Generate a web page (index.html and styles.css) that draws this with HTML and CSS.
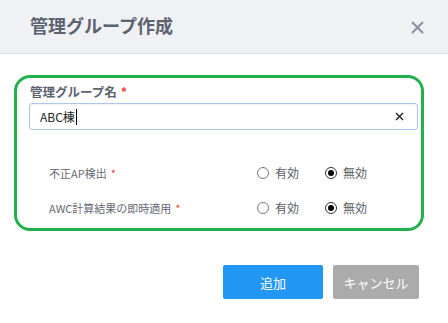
FILE: index.html
```html
<!DOCTYPE html>
<html lang="ja">
<head>
<meta charset="utf-8">
<title>管理グループ作成</title>
<link rel="stylesheet" href="styles.css">
</head>
<body>
<div class="dialog">
  <div class="header">
    <div class="title">管理グループ作成</div>
    <div class="close">
      <svg width="13" height="13" viewBox="0 0 13 13"><path d="M1 1L12 12M12 1L1 12" stroke="#8b909c" stroke-width="2" fill="none"/></svg>
    </div>
  </div>
  <div class="panel">
    <div class="field-label">管理グループ名<span class="req">*</span></div>
    <div class="input">
      <span class="value">ABC棟</span><span class="caret"></span>
      <span class="clear">
        <svg width="9" height="9" viewBox="0 0 9 9"><path d="M1 1L8 8M8 1L1 8" stroke="#222" stroke-width="1.4" fill="none"/></svg>
      </span>
    </div>
    <div class="row first">
      <div class="row-label">不正AP検出<span class="req">*</span></div>
      <div class="radios">
        <div class="radio"><span class="circle"></span><span class="rtext">有効</span></div>
        <div class="radio"><span class="circle checked"></span><span class="rtext">無効</span></div>
      </div>
    </div>
    <div class="row">
      <div class="row-label">AWC計算結果の即時適用<span class="req">*</span></div>
      <div class="radios">
        <div class="radio"><span class="circle"></span><span class="rtext">有効</span></div>
        <div class="radio"><span class="circle checked"></span><span class="rtext">無効</span></div>
      </div>
    </div>
  </div>
  <div class="footer">
    <div class="btn primary">追加</div>
    <div class="btn secondary">キャンセル</div>
  </div>
</div>
</body>
</html>
```
FILE: styles.css
```css
* { box-sizing: border-box; }
html, body { margin: 0; padding: 0; background: #fff; }
body {
  font-family: "Noto Sans CJK JP", "Noto Sans", sans-serif;
  width: 448px;
  height: 323px;
  overflow: hidden;
}
.header {
  display: flex;
  justify-content: space-between;
  height: 54px;
  background: #f0f1f4;
  border-bottom: 1px solid #dcdde1;
}
.title {
  padding-left: 30px;
  line-height: 50px;
  font-size: 18px;
  font-weight: bold;
  color: #5c6270;
}
.close {
  margin-top: 21px;
  margin-right: 24px;
  width: 13px;
  height: 13px;
  display: flex;
}
.panel {
  margin: 21px 24px 0 14px;
  border: 3px solid #21b04b;
  border-radius: 16px;
  padding: 5px 3px 2px 12px;
  height: 156px;
}
.field-label {
  padding-left: 1px;
  font-size: 12.5px;
  font-weight: bold;
  line-height: 17px;
  color: #5c6270;
}
.req {
  color: #e5463a;
  margin-left: 4px;
  font-weight: bold;
}
.input {
  margin-top: 3px;
  height: 27px;
  border: 1px solid #a9c7e8;
  border-radius: 3px;
  box-shadow: inset 0 1px 2px rgba(0,0,0,0.06);
  display: flex;
  align-items: center;
  padding-left: 10px;
  padding-right: 13px;
  font-size: 12px;
  color: #222;
}
.caret {
  width: 1px;
  height: 16px;
  background: #000;
  margin-left: 1px;
}
.clear {
  margin-left: auto;
  display: flex;
}
.row {
  display: flex;
  align-items: center;
  height: 35px;
  padding-left: 20px;
}
.row.first { margin-top: 25px; }
.row-label {
  width: 208px;
  font-size: 11px;
  color: #666a73;
}
.row-label .req { font-weight: normal; margin-left: 4px; }
.radios {
  display: flex;
  gap: 26px;
}
.radio {
  display: flex;
  align-items: center;
  gap: 6px;
}
.circle {
  width: 12px;
  height: 12px;
  border: 1px solid #777;
  border-radius: 50%;
  display: flex;
  align-items: center;
  justify-content: center;
}
.circle.checked { border-color: #333; }
.circle.checked::after {
  content: "";
  width: 6px;
  height: 6px;
  border-radius: 50%;
  background: #000;
}
.rtext {
  font-size: 12px;
  color: #555a63;
}
.footer {
  display: flex;
  justify-content: flex-end;
  gap: 10px;
  margin-top: 34px;
  margin-right: 29px;
}
.btn {
  height: 34px;
  border-radius: 2px;
  color: #fff;
  font-size: 13px;
  display: flex;
  align-items: center;
  justify-content: center;
}
.primary { width: 100px; background: #2196f3; }
.secondary { width: 86px; background: #ababab; }
```
